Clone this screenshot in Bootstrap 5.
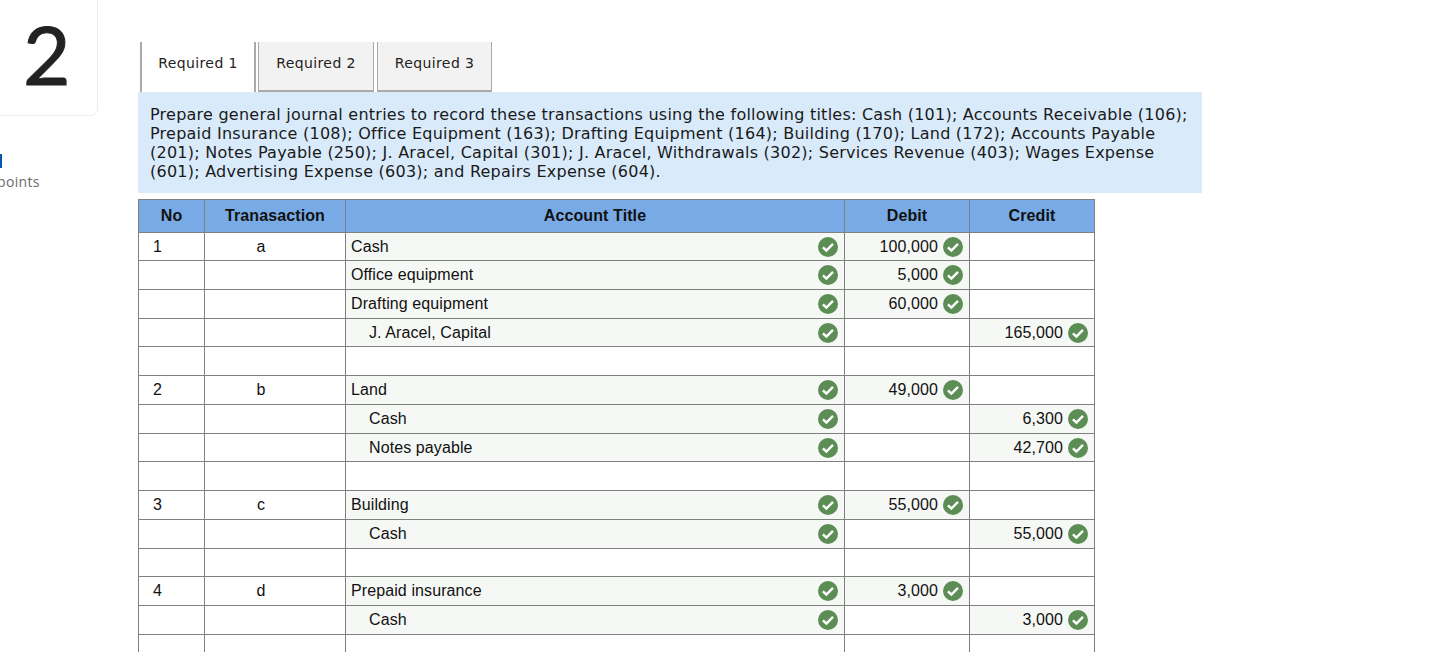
<!DOCTYPE html>
<html lang="en">
<head>
<meta charset="utf-8">
<title>Required 1</title>
<link href="https://cdn.jsdelivr.net/npm/bootstrap@5.3.0/dist/css/bootstrap.min.css" rel="stylesheet">
<style>
html, body { height: 652px; overflow: hidden; background: #fff; }
.page-shell { height: 652px; overflow: hidden; }
.side-col { width: 138px; flex: none; overflow: hidden; font-family: "Open Sans", sans-serif; }
.q-card { width: 118px; height: 127px; margin: -11px 0 0 -20px; border: 1px solid #eeeeee; border-radius: 8px; font-family: Lato, sans-serif; font-size: 82px; line-height: 1; color: #222; -webkit-text-stroke: 1px #222; padding-left: 42px; padding-top: 22px; }
.pts-mark { width: 2px; height: 14px; margin-top: 38px; background: #0a56b5; }
.pts-text { margin: 5px 0 0 -3px; font-size: 14px; letter-spacing: .35px; line-height: 18px; color: #6b6b6b; }
.main-col { width: 1064px; padding-top: 42px; }
.req-tabs { margin-left: 2px; gap: 2px; height: 50px; border-bottom: 0; }
.req-tab.nav-link { width: 116px; height: 50px; padding: 0 0 5px; display: flex; align-items: center; justify-content: center; font-family: "DejaVu Sans", sans-serif; font-size: 14px; letter-spacing: .4px; color: #222; background: #f2f2f2; border: 0; border-left: 1px solid #aaa; border-right: 1px solid #aaa; border-bottom: 2px solid #aaa; border-radius: 0; }
.req-tab.nav-link.active { background: #fff; border-left: 2px solid #aaa; border-right: 2px solid #aaa; border-bottom: 0; padding-bottom: 7px; color: #222; }
.req-tabs .nav-item:last-child .req-tab { width: 115px; margin-left: 1px; }
.info-box { background: #d9ebfa; padding: 13px 12px 12px; height: 101px; font-family: "DejaVu Sans", sans-serif; font-size: 16px; letter-spacing: .24px; line-height: 19px; color: #1a1a1a; }
.journal { width: 957px; margin: 6px 0 0; table-layout: fixed; border-collapse: collapse; font-family: "Liberation Sans", sans-serif; font-size: 16px; letter-spacing: .1px; color: #111; --bs-table-border-color: #808080; }
.journal > :not(caption) > * > * { padding: 0 5px; border: 1px solid #808080; vertical-align: middle; line-height: 20px; background: transparent; box-shadow: none; color: #111; }
.journal thead th { background: #78abe6; height: 33px; text-align: center; font-weight: 700; }
.journal tbody tr { height: 29px; }
.journal tbody tr:first-child, .journal tbody tr:nth-child(4n) { height: 28px; }
.journal td.ok { background: #f6f8f5; }
.c-no { width: 66px; }
.c-tr { width: 141px; }
.c-ti { width: 499px; }
.c-am { width: 125px; }
.journal td.no-cell { padding-left: 14px; }
.journal td.tr-cell { text-align: center; padding-right: 33px; }
.journal td.indent { padding-left: 23px; }
.cell-row { display: flex; align-items: center; justify-content: space-between; }
.cell-amt { display: flex; align-items: center; justify-content: flex-end; gap: 5px; }
.tick { width: 20px; height: 20px; margin-right: 1px; flex: none; display: block; }
</style>
</head>
<body>
<svg width="0" height="0" class="d-block position-absolute">
  <symbol id="tick" viewBox="0 0 20 20">
    <circle cx="10" cy="10" r="10" fill="#5c8d55"/>
    <path d="M4.9 10.3l3.5 3.2 6.6-6.6" fill="none" stroke="#fff" stroke-width="2.4"/>
  </symbol>
</svg>
<div class="page-shell d-flex">
  <aside class="side-col">
    <div class="q-card">2</div>
    <div class="pts-mark"></div>
    <div class="pts-text">points</div>
  </aside>
  <main class="main-col">
    <ul class="nav nav-tabs req-tabs">
      <li class="nav-item"><a class="nav-link req-tab active" href="#">Required 1</a></li>
      <li class="nav-item"><a class="nav-link req-tab" href="#">Required 2</a></li>
      <li class="nav-item"><a class="nav-link req-tab" href="#">Required 3</a></li>
    </ul>
    <div class="info-box">Prepare general journal entries to record these transactions using the following titles: Cash (101); Accounts Receivable (106); Prepaid Insurance (108); Office Equipment (163); Drafting Equipment (164); Building (170); Land (172); Accounts Payable (201); Notes Payable (250); J. Aracel, Capital (301); J. Aracel, Withdrawals (302); Services Revenue (403); Wages Expense (601); Advertising Expense (603); and Repairs Expense (604).</div>
    <table class="table table-bordered journal">
      <colgroup><col class="c-no"><col class="c-tr"><col class="c-ti"><col class="c-am"><col class="c-am"></colgroup>
      <thead><tr><th>No</th><th>Tranasaction</th><th>Account Title</th><th>Debit</th><th>Credit</th></tr></thead>
      <tbody id="rows">
        <tr><td class="no-cell">1</td><td class="tr-cell">a</td><td class="ok"><div class="cell-row"><span>Cash</span><svg class="tick"><use href="#tick"/></svg></div></td><td class="ok"><div class="cell-amt">100,000<svg class="tick"><use href="#tick"/></svg></div></td><td></td></tr>
        <tr><td></td><td></td><td class="ok"><div class="cell-row"><span>Office equipment</span><svg class="tick"><use href="#tick"/></svg></div></td><td class="ok"><div class="cell-amt">5,000<svg class="tick"><use href="#tick"/></svg></div></td><td></td></tr>
        <tr><td></td><td></td><td class="ok"><div class="cell-row"><span>Drafting equipment</span><svg class="tick"><use href="#tick"/></svg></div></td><td class="ok"><div class="cell-amt">60,000<svg class="tick"><use href="#tick"/></svg></div></td><td></td></tr>
        <tr><td></td><td></td><td class="ok indent"><div class="cell-row"><span>J. Aracel, Capital</span><svg class="tick"><use href="#tick"/></svg></div></td><td></td><td class="ok"><div class="cell-amt">165,000<svg class="tick"><use href="#tick"/></svg></div></td></tr>
        <tr><td></td><td></td><td></td><td></td><td></td></tr>
        <tr><td class="no-cell">2</td><td class="tr-cell">b</td><td class="ok"><div class="cell-row"><span>Land</span><svg class="tick"><use href="#tick"/></svg></div></td><td class="ok"><div class="cell-amt">49,000<svg class="tick"><use href="#tick"/></svg></div></td><td></td></tr>
        <tr><td></td><td></td><td class="ok indent"><div class="cell-row"><span>Cash</span><svg class="tick"><use href="#tick"/></svg></div></td><td></td><td class="ok"><div class="cell-amt">6,300<svg class="tick"><use href="#tick"/></svg></div></td></tr>
        <tr><td></td><td></td><td class="ok indent"><div class="cell-row"><span>Notes payable</span><svg class="tick"><use href="#tick"/></svg></div></td><td></td><td class="ok"><div class="cell-amt">42,700<svg class="tick"><use href="#tick"/></svg></div></td></tr>
        <tr><td></td><td></td><td></td><td></td><td></td></tr>
        <tr><td class="no-cell">3</td><td class="tr-cell">c</td><td class="ok"><div class="cell-row"><span>Building</span><svg class="tick"><use href="#tick"/></svg></div></td><td class="ok"><div class="cell-amt">55,000<svg class="tick"><use href="#tick"/></svg></div></td><td></td></tr>
        <tr><td></td><td></td><td class="ok indent"><div class="cell-row"><span>Cash</span><svg class="tick"><use href="#tick"/></svg></div></td><td></td><td class="ok"><div class="cell-amt">55,000<svg class="tick"><use href="#tick"/></svg></div></td></tr>
        <tr><td></td><td></td><td></td><td></td><td></td></tr>
        <tr><td class="no-cell">4</td><td class="tr-cell">d</td><td class="ok"><div class="cell-row"><span>Prepaid insurance</span><svg class="tick"><use href="#tick"/></svg></div></td><td class="ok"><div class="cell-amt">3,000<svg class="tick"><use href="#tick"/></svg></div></td><td></td></tr>
        <tr><td></td><td></td><td class="ok indent"><div class="cell-row"><span>Cash</span><svg class="tick"><use href="#tick"/></svg></div></td><td></td><td class="ok"><div class="cell-amt">3,000<svg class="tick"><use href="#tick"/></svg></div></td></tr>
        <tr><td></td><td></td><td></td><td></td><td></td></tr>
      </tbody>
    </table>
  </main>
</div>
<script src="https://cdn.jsdelivr.net/npm/bootstrap@5.3.0/dist/js/bootstrap.bundle.min.js"></script>
</body>
</html>
